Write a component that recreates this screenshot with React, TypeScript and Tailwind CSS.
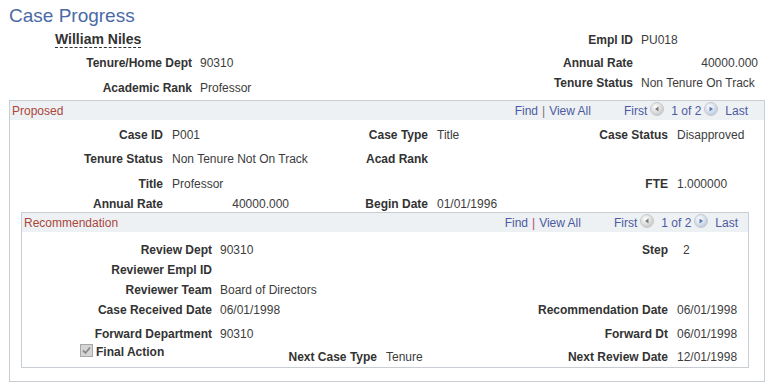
import clsx from "clsx";
import React from "react";

const Lbl = ({ className, children }: { className?: string; children?: React.ReactNode }) => (
    <div className={clsx("shrink-0 whitespace-nowrap text-right font-bold text-[#333]", className)}>
        {children}
    </div>
);

const Val = ({ className, children }: { className?: string; children?: React.ReactNode }) => (
    <div className={clsx("whitespace-nowrap text-[#3c3c3c]", className)}>{children}</div>
);

const NavIcon = ({ dir }: { dir: "left" | "right" }) => (
    <svg width="14" height="14" viewBox="0 0 14 14" className="mt-[1px] shrink-0">
        <defs>
            <radialGradient id={`g-${dir}`} cx="40%" cy="35%" r="70%">
                <stop offset="0%" stopColor="#ffffff" />
                <stop offset="100%" stopColor={dir === "left" ? "#c4c4c4" : "#b4c6de"} />
            </radialGradient>
        </defs>
        <circle cx="7" cy="7" r="6.5" fill={`url(#g-${dir})`} stroke="#c8c8c8" />
        {dir === "left" ? (
            <path d="M5 7 L8.5 4.5 L8.5 9.5 Z" fill="#7a7a7a" />
        ) : (
            <path d="M9 7 L5.5 4.5 L5.5 9.5 Z" fill="#5878b0" />
        )}
    </svg>
);

const Nav = ({ sepColor }: { sepColor: string }) => (
    <div className="flex items-start text-[#4c5aa0]">
        <span className="pt-[3px]">Find</span>
        <span className={clsx("mx-[4px] pt-[3px]", sepColor)}>|</span>
        <span className="pt-[3px]">View All</span>
        <span className="ml-[33px] pt-[3px]">First</span>
        <span className="ml-[3px]">
            <NavIcon dir="left" />
        </span>
        <span className="ml-[7px] pt-[3px]">1 of 2</span>
        <span className="ml-[3px]">
            <NavIcon dir="right" />
        </span>
        <span className="ml-[7px] pt-[3px]">Last</span>
    </div>
);

const Checked = () => (
    <div className="mt-[-1px] flex h-[13px] w-[13px] shrink-0 items-center justify-center border border-[#a8a8a8] bg-[#d4d4d4]">
        <svg width="9" height="9" viewBox="0 0 9 9">
            <path d="M1 4.5 L3.5 7 L8 1.5" fill="none" stroke="#8a8a8a" strokeWidth="1.8" />
        </svg>
    </div>
);

export default function App() {
    return (
        <div className="h-[391px] w-[773px] bg-white font-['Liberation_Sans',Arial,sans-serif] text-[12px] leading-[14px]">
            <div className="h-[28px] pl-[9px] pt-[5px] text-[19px] leading-[22px] text-[#4a6aa6]">
                Case Progress
            </div>

            <div className="flex h-[72px]">
                <div className="w-[540px]">
                    <div className="ml-[55px] mt-[3px] inline-block h-[17px] border-b border-dashed border-[#333] text-[14px] font-bold leading-[16px] text-[#333]">
                        William Niles
                    </div>
                    <div className="mt-[8px] flex">
                        <Lbl className="w-[192px]">Tenure/Home Dept</Lbl>
                        <Val className="pl-[8px]">90310</Val>
                    </div>
                    <div className="mt-[11px] flex">
                        <Lbl className="w-[192px]">Academic Rank</Lbl>
                        <Val className="pl-[8px]">Professor</Val>
                    </div>
                </div>
                <div className="pt-[5px]">
                    <div className="flex">
                        <Lbl className="w-[93px]">Empl ID</Lbl>
                        <Val className="pl-[8px]">PU018</Val>
                    </div>
                    <div className="mt-[9px] flex">
                        <Lbl className="w-[93px]">Annual Rate</Lbl>
                        <Val className="ml-[8px] w-[117px] text-right">40000.000</Val>
                    </div>
                    <div className="mt-[6px] flex">
                        <Lbl className="w-[93px]">Tenure Status</Lbl>
                        <Val className="pl-[8px]">Non Tenure On Track</Val>
                    </div>
                </div>
            </div>

            <div className="ml-[9px] w-[756px] border border-[#c9ced4] pb-[13px]">
                <div className="flex h-[19px] items-start justify-between bg-[#eef1f4] pl-[2px] pr-[16px]">
                    <span className="pt-[3px] text-[#a9473a]">Proposed</span>
                    <Nav sepColor="text-[#777]" />
                </div>

                <div className="pt-[8px]">
                    <div className="flex h-[24px]">
                        <div className="flex w-[354px]">
                            <Lbl className="w-[153px]">Case ID</Lbl>
                            <Val className="pl-[9px]">P001</Val>
                        </div>
                        <div className="flex w-[156px]">
                            <Lbl className="w-[64px]">Case Type</Lbl>
                            <Val className="pl-[9px]">Title</Val>
                        </div>
                        <div className="flex flex-1">
                            <Lbl className="w-[148px]">Case Status</Lbl>
                            <Val className="pl-[9px]">Disapproved</Val>
                        </div>
                    </div>
                    <div className="flex h-[25px]">
                        <div className="flex w-[354px]">
                            <Lbl className="w-[153px]">Tenure Status</Lbl>
                            <Val className="pl-[9px]">Non Tenure Not On Track</Val>
                        </div>
                        <div className="flex w-[156px]">
                            <Lbl className="w-[64px]">Acad Rank</Lbl>
                        </div>
                    </div>
                    <div className="flex h-[20px]">
                        <div className="flex w-[354px]">
                            <Lbl className="w-[153px]">Title</Lbl>
                            <Val className="pl-[9px]">Professor</Val>
                        </div>
                        <div className="w-[156px]" />
                        <div className="flex flex-1">
                            <Lbl className="w-[148px]">FTE</Lbl>
                            <Val className="pl-[9px]">1.000000</Val>
                        </div>
                    </div>
                    <div className="flex h-[15px]">
                        <div className="flex w-[354px]">
                            <Lbl className="w-[153px]">Annual Rate</Lbl>
                            <Val className="ml-[9px] w-[117px] text-right">40000.000</Val>
                        </div>
                        <div className="flex w-[156px]">
                            <Lbl className="w-[64px]">Begin Date</Lbl>
                            <Val className="pl-[9px]">01/01/1996</Val>
                        </div>
                    </div>
                </div>

                <div className="ml-[11px] mr-[15px] border border-[#c9ced4]">
                    <div className="flex h-[19px] items-start justify-between bg-[#eef1f4] pl-[2px] pr-[10px]">
                        <span className="pt-[3px] text-[#a9473a]">Recommendation</span>
                        <Nav sepColor="text-[#b8457a]" />
                    </div>

                    <div className="pt-[11px]">
                        <div className="flex h-[20px]">
                            <div className="flex w-[228px]">
                                <Lbl className="w-[190px]">Review Dept</Lbl>
                                <Val className="pl-[8px]">90310</Val>
                            </div>
                            <div className="w-[270px]" />
                            <div className="flex flex-1">
                                <Lbl className="w-[148px]">Step</Lbl>
                                <Val className="pl-[15px]">2</Val>
                            </div>
                        </div>
                        <div className="flex h-[20px]">
                            <div className="flex w-[228px]">
                                <Lbl className="w-[190px]">Reviewer Empl ID</Lbl>
                            </div>
                        </div>
                        <div className="flex h-[20px]">
                            <div className="flex w-[228px]">
                                <Lbl className="w-[190px]">Reviewer Team</Lbl>
                                <Val className="pl-[8px]">Board of Directors</Val>
                            </div>
                        </div>
                        <div className="flex h-[24px]">
                            <div className="flex w-[228px]">
                                <Lbl className="w-[190px]">Case Received Date</Lbl>
                                <Val className="pl-[8px]">06/01/1998</Val>
                            </div>
                            <div className="w-[270px]" />
                            <div className="flex flex-1">
                                <Lbl className="w-[148px]">Recommendation Date</Lbl>
                                <Val className="pl-[9px]">06/01/1998</Val>
                            </div>
                        </div>
                        <div className="flex h-[18px]">
                            <div className="flex w-[228px]">
                                <Lbl className="w-[190px]">Forward Department</Lbl>
                                <Val className="pl-[8px]">90310</Val>
                            </div>
                            <div className="w-[270px]" />
                            <div className="flex flex-1">
                                <Lbl className="w-[148px]">Forward Dt</Lbl>
                                <Val className="pl-[9px]">06/01/1998</Val>
                            </div>
                        </div>
                        <div className="flex h-[22px]">
                            <div className="flex w-[228px] items-start pl-[58px]">
                                <Checked />
                                <span className="ml-[3px] font-bold text-[#333]">Final Action</span>
                            </div>
                            <div className="mt-[5px] flex w-[270px]">
                                <Lbl className="w-[127px]">Next Case Type</Lbl>
                                <Val className="pl-[9px]">Tenure</Val>
                            </div>
                            <div className="mt-[5px] flex flex-1">
                                <Lbl className="w-[148px]">Next Review Date</Lbl>
                                <Val className="pl-[9px]">12/01/1998</Val>
                            </div>
                        </div>
                    </div>
                </div>
            </div>
        </div>
    );
}
